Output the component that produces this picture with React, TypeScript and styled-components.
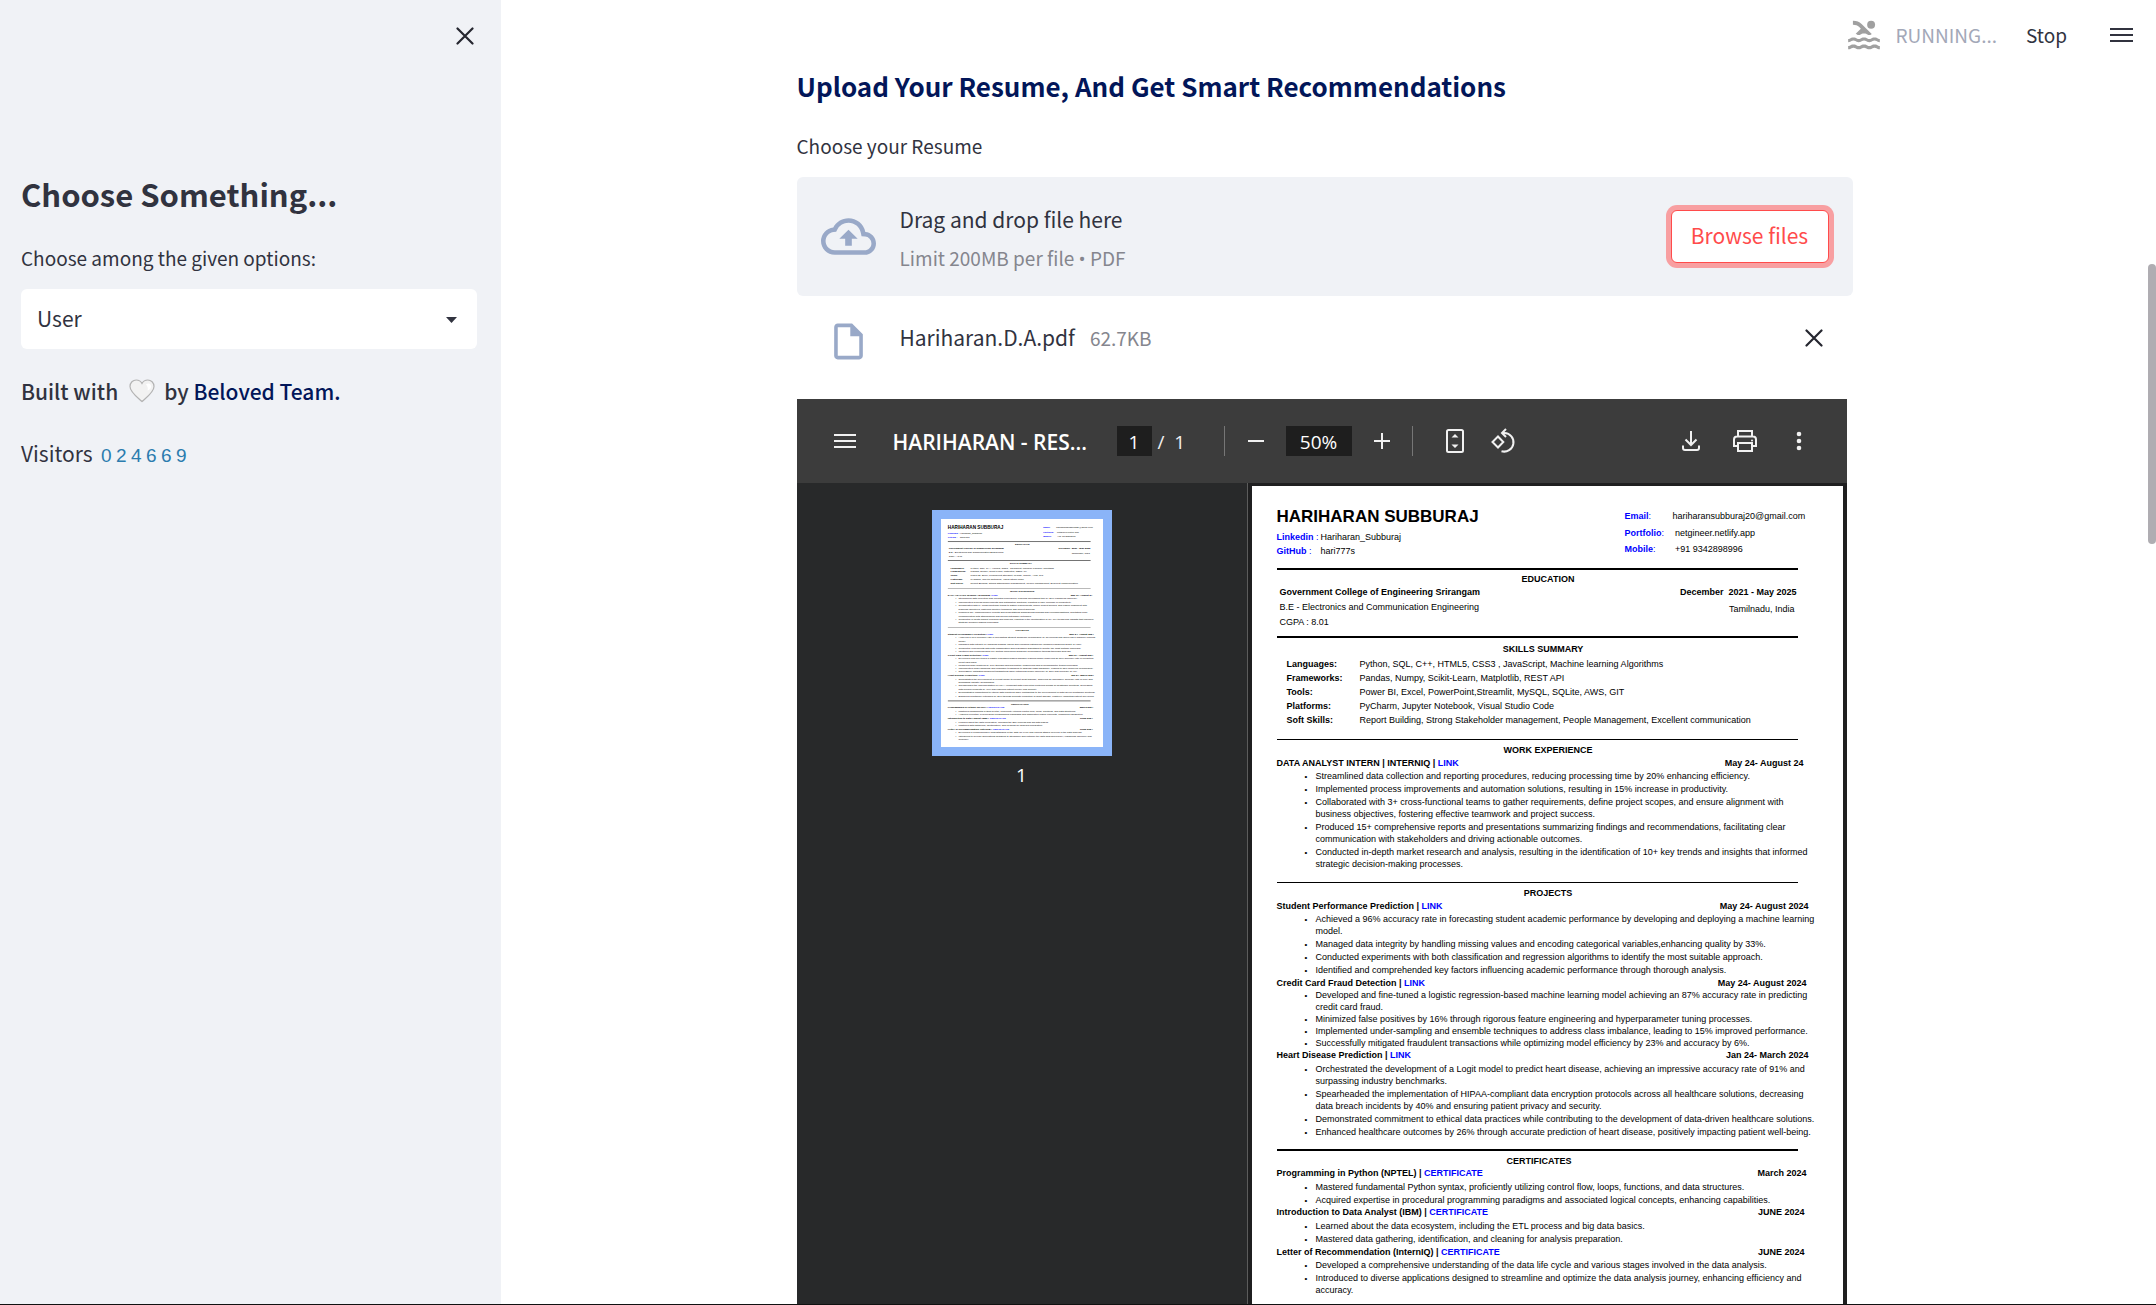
import React from "react";
import styled, { createGlobalStyle } from "styled-components";
import { MdPool } from "react-icons/md";

const ui = `"Noto Sans CJK SC", "Noto Sans", sans-serif`;
const viewerFont = `"Open Sans", "Noto Sans", sans-serif`;
const docFont = `"Liberation Sans", Arial, sans-serif`;

const Global = createGlobalStyle`
  *, *::before, *::after { box-sizing: border-box; }
  body { margin: 0; background: #fff; color: #31333f; font-family: ${ui}; }
  h1, h2, h3, h4, p, ul, dl, dd { margin: 0; padding: 0; }
  button { border: 0; padding: 0; background: none; color: inherit; font: inherit; cursor: pointer; }
  a { text-decoration: none; }
`;

/* ---------- application shell ---------- */

const Shell = styled.div`
  display: flex;
  height: 100vh;
  overflow: hidden;
  border-bottom: 1px solid #111;
`;

const Sidebar = styled.aside`
  flex: 0 0 501px;
  padding: 21px 24px 0 21px;
  background: #f0f2f6;
`;

const SidebarTop = styled.div`
  display: flex;
  justify-content: flex-end;
  height: 153px;
  margin-right: -3px;
  align-items: flex-start;
`;

const IconButton = styled.button`
  display: grid;
  place-items: center;
  width: 30px;
  height: 30px;
`;

const SidebarTitle = styled.h2`
  margin-bottom: 30px;
  font-size: 31px;
  line-height: 40px;
  font-weight: 600;
`;

const FieldLabel = styled.label`
  display: block;
  margin-bottom: 17px;
  font-size: 19px;
  line-height: 28px;
`;

const SelectBox = styled.div`
  position: relative;
  svg {
    position: absolute;
    right: 20px;
    top: 28px;
    pointer-events: none;
  }
`;

const Select = styled.select`
  appearance: none;
  width: 100%;
  height: 60px;
  padding: 0 16px 2px;
  border: 0;
  border-radius: 6px;
  background: #fff;
  color: inherit;
  font: 400 21px ${ui};
`;

const Credit = styled.p`
  display: flex;
  align-items: center;
  margin-top: 26px;
  font-size: 21px;
  line-height: 32px;
  font-weight: 500;
  white-space: pre;
  svg { margin: 0 9px 0 11px; }
`;

const CreditLink = styled.a`
  color: #021659;
`;

const Visitors = styled.p`
  display: flex;
  margin-top: 30px;
  font-size: 21px;
  line-height: 32px;
`;

const Counter = styled.span`
  display: grid;
  grid-auto-flow: column;
  grid-auto-columns: 15px;
  margin-left: 6px;
  text-align: center;
  color: #2b7cae;
  font-family: "Liberation Sans", Arial, sans-serif;
  font-size: 19px;
  line-height: 38px;
`;

const Main = styled.main`
  flex: 1;
  min-width: 0;
  display: flex;
  flex-direction: column;
`;

const TopBar = styled.header`
  display: flex;
  justify-content: flex-end;
  align-items: center;
  height: 68px;
  padding: 2px 12px 0 0;
  font-size: 19px;
  line-height: 28px;
`;

const Running = styled.span`
  margin: 0 29px 0 13px;
  color: #a3a8b8;
`;

const MenuButton = styled(IconButton)`
  margin-left: 39px;
`;

const Column = styled.div`
  flex: 1;
  min-height: 0;
  display: flex;
  flex-direction: column;
  width: calc(100% - 64px);
  max-width: 1056px;
  margin: 0 auto;
`;

const PageTitle = styled.h1`
  margin-bottom: 28px;
  color: #021659;
  font-size: 26px;
  line-height: 36px;
  font-weight: 600;
`;

const DropZone = styled.section`
  display: flex;
  align-items: center;
  height: 119px;
  padding: 0 24px;
  border-radius: 6px;
  background: #f0f2f6;
`;

const DropText = styled.div`
  flex: 1;
  display: grid;
  gap: 9px;
  padding-top: 3px;
  margin-left: 24px;
`;

const Line = styled.span`
  font-size: 21px;
  line-height: 32px;
`;

const Hint = styled.span`
  color: #85868e;
  font-size: 19px;
  line-height: 28px;
`;

const Dot = styled.span`
  font-family: "Open Sans", sans-serif;
`;

const Browse = styled.button`
  width: 158px;
  height: 53px;
  margin-bottom: 1px;
  padding-bottom: 2px;
  border: 1px solid #ff4b4b;
  border-radius: 6px;
  background: #fff;
  box-shadow: 0 0 0 5px rgba(255, 75, 75, 0.5);
  color: #ff4b4b;
  font-size: 21px;
  line-height: 32px;
`;

const FileRow = styled.div`
  display: flex;
  align-items: flex-start;
  height: 103px;
  padding: 24px 24px 0 30px;
  ${Line} { margin: 1px 0 0 30px; }
  ${Hint} { flex: 1; margin: 4px 0 0 15px; }
  ${IconButton} { margin-top: 3px; }
`;

const Rail = styled.div`
  flex: 0 0 8px;
  padding-top: 264px;
`;

const Thumb = styled.div`
  height: 280px;
  border-radius: 4px;
  background: #afadb2;
`;

/* ---------- PDF viewer ---------- */

const Viewer = styled.section`
  flex: 1;
  min-height: 0;
  display: flex;
  flex-direction: column;
  margin-right: 6px;
  overflow: hidden;
  background: #28292a;
  color: #fff;
  font-family: ${viewerFont};
`;

const Toolbar = styled.div`
  flex: 0 0 84px;
  display: flex;
  align-items: center;
  padding: 0 33px;
  background: #3c3c3c;
  color: #f1f1f1;
  font-size: 19px;
  line-height: 30px;
`;

const DocName = styled.span`
  width: 200px;
  margin: 0 24px 0 33px;
  padding-top: 2px;
  color: #fff;
  font-size: 21px;
  font-weight: 600;
  white-space: nowrap;
`;

const ToolInput = styled.input<{ $width: number }>`
  width: ${(p) => p.$width}px;
  height: 30px;
  padding: 2px 0 0;
  border: 0;
  background: #1e1e1e;
  color: #fff;
  text-align: center;
  font: 400 19px ${viewerFont};
`;

const PageCount = styled.span`
  width: 72px;
  padding: 2px 0 0 6px;
  white-space: pre;
`;

const Divider = styled.span<{ $after?: number }>`
  width: 1px;
  height: 30px;
  margin-right: ${(p) => p.$after ?? 0}px;
  background: #767676;
`;

const ToolGroup = styled.div<{ $gap: number; $end?: boolean }>`
  display: flex;
  align-items: center;
  gap: ${(p) => p.$gap}px;
  margin-left: ${(p) => (p.$end ? "auto" : "0")};
`;

const Panes = styled.div`
  flex: 1;
  min-height: 0;
  display: flex;
`;

const ThumbPane = styled.div`
  flex: 1;
  display: flex;
  flex-direction: column;
  align-items: center;
  padding-top: 27px;
  border-right: 1px solid #5c5c5c;
  font-size: 19px;
  line-height: 38px;
`;

const ThumbFrame = styled.div`
  width: 180px;
  height: 246px;
  border: 9px solid #8ab4f8;
  background: #fff;
  overflow: hidden;
`;

const Miniature = styled.div`
  width: 591px;
  transform: scale(0.274);
  transform-origin: 0 0;
`;

const PagePane = styled.div`
  flex: 0 0 599px;
  padding: 3px 4px 0 4px;
  background: #1f1f20;
  overflow: hidden;
`;

/* ---------- résumé document ---------- */

const Sheet = styled.article`
  height: 832px;
  padding: 21px 34px 0 25px;
  background: #fff;
  color: #000;
  font-family: ${docFont};
  font-size: 9px;
  line-height: 12px;
  white-space: nowrap;
`;

const SheetHead = styled.div`
  display: flex;
  justify-content: space-between;
`;

const Name = styled.h2`
  margin-bottom: 3px;
  font-size: 17px;
  line-height: 20px;
  font-weight: 700;
`;

const Pairs = styled.dl<{ $label: number; $line: number; $blue?: boolean }>`
  display: grid;
  grid-template-columns: ${(p) => p.$label}px 1fr;
  line-height: ${(p) => p.$line}px;
  dt { color: ${(p) => (p.$blue ? "#00f" : "#000")}; }
`;

const Contact = styled(Pairs)`
  width: 184px;
  padding-top: 1px;
`;

const Skills = styled(Pairs)`
  margin: 2px 0 0 10px;
`;

const Rule = styled.hr<{ $before: number; $thick?: boolean }>`
  height: ${(p) => (p.$thick ? 2 : 1)}px;
  margin: ${(p) => p.$before}px 11px 0 0;
  border: 0;
  background: #000;
`;

const Section = styled.h3<{ $side?: "left" | "right"; $before?: number }>`
  margin: ${(p) => p.$before ?? 4}px 0 0;
  padding: ${(p) => (p.$side === "right" ? "0 0 0 11px" : p.$side === "left" ? "0 7px 0 0" : "0 0 0 1px")};
  font-size: 9px;
  font-weight: 700;
  text-align: center;
`;

const School = styled.div`
  display: flex;
  justify-content: space-between;
  padding: 0 12px 0 3px;
  line-height: 15px;
`;

const SchoolSide = styled.div`
  text-align: right;
  p { padding: 2px 2px 0 0; }
`;

const Entry = styled.h4<{ $inset: number; $before?: number }>`
  display: flex;
  justify-content: space-between;
  margin-top: ${(p) => p.$before ?? 0}px;
  padding-right: ${(p) => p.$inset}px;
  font-size: 9px;
  font-weight: 700;
  a { color: #00f; }
`;

const Bullets = styled.ul<{ $gap: number; $before: number }>`
  display: grid;
  gap: ${(p) => p.$gap}px;
  margin: ${(p) => p.$before}px 0 0 28px;
  list-style: none;
`;

const Bullet = styled.li`
  display: grid;
  grid-template-columns: 11px 1fr;
  &::before { content: "•"; height: 12px; font-size: 8px; line-height: 14px; }
`;

const TextLine = styled.span`
  grid-column: 2;
`;

type Job = { title: string; link: string; date: string; inset: number; gap: number; lead: number; before: number; items: string[][] };

const work: Job[] = [
  {
    title: "DATA ANALYST INTERN | INTERNIQ | ", link: "LINK", date: "May 24- August 24", inset: 5, gap: 1, lead: 1, before: 1,
    items: [
      ["Streamlined data collection and reporting procedures, reducing processing time by 20% enhancing efficiency."],
      ["Implemented process improvements and automation solutions, resulting in 15% increase in productivity."],
      ["Collaborated with 3+ cross-functional teams to gather requirements, define project scopes, and ensure alignment with", "business objectives, fostering effective teamwork and project success."],
      ["Produced 15+ comprehensive reports and presentations summarizing findings and recommendations, facilitating clear", "communication with stakeholders and driving actionable outcomes."],
      ["Conducted in-depth market research and analysis, resulting in the identification of 10+ key trends and insights that informed", "strategic decision-making processes."],
    ],
  },
];

const projects: Job[] = [
  {
    title: "Student Performance Prediction | ", link: "LINK", date: "May 24- August 2024", inset: 0, gap: 1, lead: 1, before: 1,
    items: [
      ["Achieved a 96% accuracy rate in forecasting student academic performance by developing and deploying a machine learning", "model."],
      ["Managed data integrity by handling missing values and encoding categorical variables,enhancing quality by 33%."],
      ["Conducted experiments with both classification and regression algorithms to identify the most suitable approach."],
      ["Identified and comprehended key factors influencing academic performance through thorough analysis."],
    ],
  },
  {
    title: "Credit Card Fraud Detection | ", link: "LINK", date: "May 24- August 2024", inset: 2, gap: 0, lead: 0, before: 1,
    items: [
      ["Developed and fine-tuned a logistic regression-based machine learning model achieving an 87% accuracy rate in predicting", "credit card fraud."],
      ["Minimized false positives by 16% through rigorous feature engineering and hyperparameter tuning processes."],
      ["Implemented under-sampling and ensemble techniques to address class imbalance, leading to 15% improved performance."],
      ["Successfully mitigated fraudulent transactions while optimizing model efficiency by 23% and accuracy by 6%."],
    ],
  },
  {
    title: "Heart Disease Prediction | ", link: "LINK", date: "Jan 24- March 2024", inset: 0, gap: 1, lead: 2, before: 0,
    items: [
      ["Orchestrated the development of a Logit model to predict heart disease, achieving an impressive accuracy rate of 91% and", "surpassing industry benchmarks."],
      ["Spearheaded the implementation of HIPAA-compliant data encryption protocols across all healthcare solutions, decreasing", "data breach incidents by 40% and ensuring patient privacy and security."],
      ["Demonstrated commitment to ethical data practices while contributing to the development of data-driven healthcare solutions."],
      ["Enhanced healthcare outcomes by 26% through accurate prediction of heart disease, positively impacting patient well-being."],
    ],
  },
];

const certificates: Job[] = [
  {
    title: "Programming in Python (NPTEL) | ", link: "CERTIFICATE", date: "March 2024", inset: 2, gap: 1, lead: 2, before: 0,
    items: [
      ["Mastered fundamental Python syntax, proficiently utilizing control flow, loops, functions, and data structures."],
      ["Acquired expertise in procedural programming paradigms and associated logical concepts, enhancing capabilities."],
    ],
  },
  {
    title: "Introduction to Data Analyst (IBM) | ", link: "CERTIFICATE", date: "JUNE 2024", inset: 4, gap: 1, lead: 2, before: 0,
    items: [
      ["Learned about the data ecosystem, including the ETL process and big data basics."],
      ["Mastered data gathering, identification, and cleaning for analysis preparation."],
    ],
  },
  {
    title: "Letter of Recommendation (InternIQ) | ", link: "CERTIFICATE", date: "JUNE 2024", inset: 4, gap: 1, lead: 1, before: 1,
    items: [
      ["Developed a comprehensive understanding of the data life cycle and various stages involved in the data analysis."],
      ["Introduced to diverse applications designed to streamline and optimize the data analysis journey, enhancing efficiency and", "accuracy."],
    ],
  },
];

const Jobs = ({ list }: { list: Job[] }) => (
  <>
    {list.map((job) => (
      <React.Fragment key={job.title}>
        <Entry $inset={job.inset} $before={job.before}>
          <span>{job.title}<a href="#">{job.link}</a></span>
          <span>{job.date}</span>
        </Entry>
        <Bullets $gap={job.gap} $before={job.lead}>
          {job.items.map((lines) => (
            <Bullet key={lines[0]}>
              {lines.map((line) => <TextLine key={line}>{line}</TextLine>)}
            </Bullet>
          ))}
        </Bullets>
      </React.Fragment>
    ))}
  </>
);

const Resume = () => (
  <Sheet>
    <SheetHead>
      <div>
        <Name>HARIHARAN SUBBURAJ</Name>
        <Pairs $label={44} $line={14} $blue>
          <dt><b>Linkedin</b> :</dt><dd>Hariharan_Subburaj</dd>
          <dt><b>GitHub</b> :</dt><dd>hari777s</dd>
        </Pairs>
      </div>
      <Contact $label={48} $line={16} $blue>
        <dt><b>Email</b>:</dt><dd>hariharansubburaj20@gmail.com</dd>
        <dt><b>Portfolio</b>:</dt><dd>&nbsp;netgineer.netlify.app</dd>
        <dt><b>Mobile</b>:</dt><dd>&nbsp;+91 9342898996</dd>
      </Contact>
    </SheetHead>
    <Rule $before={10} $thick />
    <Section $side="right" $before={3}>EDUCATION</Section>
    <School>
      <div>
        <b>Government College of Engineering Srirangam</b>
        <p>B.E - Electronics and Communication Engineering</p>
        <p>CGPA : 8.01</p>
      </div>
      <SchoolSide>
        <b>December&nbsp; 2021 - May 2025</b>
        <p>Tamilnadu, India</p>
      </SchoolSide>
    </School>
    <Rule $before={6} $thick />
    <Section $before={5}>SKILLS SUMMARY</Section>
    <Skills $label={73} $line={14}>
      <dt><b>Languages:</b></dt><dd>Python, SQL, C++, HTML5, CSS3 , JavaScript, Machine learning Algorithms</dd>
      <dt><b>Frameworks:</b></dt><dd>Pandas, Numpy, Scikit-Learn, Matplotlib, REST API</dd>
      <dt><b>Tools:</b></dt><dd>Power BI, Excel, PowerPoint,Streamlit, MySQL, SQLite, AWS, GIT</dd>
      <dt><b>Platforms:</b></dt><dd>PyCharm, Jupyter Notebook, Visual Studio Code</dd>
      <dt><b>Soft Skills:</b></dt><dd>Report Building, Strong Stakeholder management, People Management, Excellent communication</dd>
    </Skills>
    <Rule $before={12} />
    <Section $side="right">WORK EXPERIENCE</Section>
    <Jobs list={work} />
    <Rule $before={12} />
    <Section $side="right">PROJECTS</Section>
    <Jobs list={projects} />
    <Rule $before={11} $thick />
    <Section $side="left">CERTIFICATES</Section>
    <Jobs list={certificates} />
  </Sheet>
);

/* ---------- icons ---------- */

const Cross = () => (
  <svg width="18" height="18" viewBox="0 0 18 18" fill="none" stroke="#262730" strokeWidth="2.2" strokeLinecap="round" aria-hidden>
    <path d="M1.5 1.5l15 15M16.5 1.5l-15 15" />
  </svg>
);

const Bars = ({ width, height, weight }: { width: number; height: number; weight: number }) => (
  <svg width={width} height={height} fill="currentColor" aria-hidden>
    <rect width={width} height={weight} />
    <rect y={(height - weight) / 2} width={width} height={weight} />
    <rect y={height - weight} width={width} height={weight} />
  </svg>
);

const Cloud = () => (
  <svg width="55" height="55" viewBox="0 0 24 24" fill="#99a9c8" aria-hidden>
    <path d="M19.35 10.04A7.49 7.49 0 0012 4C9.11 4 6.6 5.64 5.35 8.04A5.994 5.994 0 000 14c0 3.31 2.69 6 6 6h13c2.76 0 5-2.24 5-5 0-2.64-2.05-4.78-4.65-4.96zM19 18H6c-2.21 0-4-1.79-4-4 0-2.05 1.53-3.76 3.56-3.97l1.07-.11.5-.95A5.469 5.469 0 0112 6c2.62 0 4.88 1.86 5.39 4.43l.3 1.5 1.53.11A2.98 2.98 0 0122 15c0 1.65-1.35 3-3 3zM8 13h2.55v3h2.9v-3H16l-4-4z" />
  </svg>
);

const FileIcon = () => (
  <svg width="43" height="43" viewBox="0 0 24 24" fill="#99a9c8" aria-hidden>
    <path d="M14 2H6c-1.1 0-1.99.9-1.99 2L4 20c0 1.1.89 2 1.99 2H18c1.1 0 2-.9 2-2V8l-6-6zM6 20V4h7v5h5v11H6z" />
  </svg>
);

const Heart = () => (
  <svg width="26" height="24" viewBox="0 0 26 24" aria-hidden>
    <path d="M13 22.5C10 19.500 1 13.500 1 7.500C1 3.500 4 1 7.200 1C10 1 12 2.500 13 4.500C14 2.500 16 1 18.800 1C22 1 25 3.500 25 7.500C25 13.500 16 19.500 13 22.500Z" fill="#f2f2f2" stroke="#b3b3b3" strokeWidth="1.200" />
    <path d="M17 5.500c2-2 5-1 5 2c0 2-1.500 3.500-3.500 4c.8-2 .2-4-1.500-6z" fill="#fff" />
  </svg>
);

const FitPage = () => (
  <svg width="18" height="24" viewBox="0 0 18 24" fill="#f1f1f1" aria-hidden>
    <rect x="1" y="1" width="16" height="22" rx="1.500" fill="none" stroke="#f1f1f1" strokeWidth="2" />
    <path d="M5.500 8.500L9 5l3.500 3.500zM5.500 15.500L9 19l3.500-3.500z" />
  </svg>
);

const Rotate = () => (
  <svg width="26" height="26" viewBox="0 0 26 26" fill="none" stroke="#f1f1f1" strokeWidth="2" aria-hidden>
    <path d="M8 8.500l5.300 5.500L8 19.500 2.500 14z" />
    <path d="M11.500 23.200a9.300 9.300 0 1 0 3-18.200h-2.500" />
    <path d="M16 1l-4 4 4 4" />
  </svg>
);

const Download = () => (
  <svg width="18" height="20" viewBox="0 0 18 20" fill="none" stroke="#f1f1f1" strokeWidth="2" aria-hidden>
    <path d="M9 0v13.500M3.500 8.500L9 14l5.500-5.500M1 14.500V17q0 2 2 2h12q2 0 2-2v-2.500" />
  </svg>
);

const Print = () => (
  <svg width="24" height="22" viewBox="0 0 24 22" fill="none" stroke="#f1f1f1" strokeWidth="2" aria-hidden>
    <path d="M5 6.500V1h14v5.500M5 16H1V9.500q0-3 3-3h16q3 0 3 3V16h-4M5 13h14v8H5z" />
    <circle cx="19" cy="10.500" r="1" fill="#f1f1f1" stroke="none" />
  </svg>
);

const More = () => (
  <svg width="6" height="20" viewBox="0 0 6 20" fill="#f1f1f1" aria-hidden>
    <circle cx="3" cy="3" r="2.300" /><circle cx="3" cy="10" r="2.300" /><circle cx="3" cy="17" r="2.300" />
  </svg>
);

const Step = ({ plus }: { plus?: boolean }) => (
  <svg width="16" height="16" viewBox="0 0 16 16" stroke="#f1f1f1" strokeWidth="2" aria-hidden>
    <path d={plus ? "M0 8h16M8 0v16" : "M0 8h16"} />
  </svg>
);

/* ---------- page ---------- */

export default function App() {
  return (
    <Shell>
      <Global />
      <Sidebar>
        <SidebarTop>
          <IconButton aria-label="Close sidebar"><Cross /></IconButton>
        </SidebarTop>
        <SidebarTitle>Choose Something...</SidebarTitle>
        <FieldLabel htmlFor="role">Choose among the given options:</FieldLabel>
        <SelectBox>
          <Select id="role" defaultValue="User">
            <option>User</option>
          </Select>
          <svg width="11" height="6" viewBox="0 0 11 6" fill="#31333f" aria-hidden><path d="M0 0h11L5.500 6z" /></svg>
        </SelectBox>
        <Credit>Built with<Heart />by <CreditLink href="#">Beloved Team.</CreditLink></Credit>
        <Visitors>
          Visitors
          <Counter>{"024669".split("").map((digit, i) => <span key={i}>{digit}</span>)}</Counter>
        </Visitors>
      </Sidebar>

      <Main>
        <TopBar>
          <MdPool size={38} color="#a0a0a0" aria-hidden />
          <Running>RUNNING...</Running>
          <button>Stop</button>
          <MenuButton aria-label="Menu"><Bars width={23} height={14} weight={2} /></MenuButton>
        </TopBar>
        <Column>
          <PageTitle>Upload Your Resume, And Get Smart Recommendations</PageTitle>
          <FieldLabel as="p">Choose your Resume</FieldLabel>
          <DropZone>
            <Cloud />
            <DropText>
              <Line>Drag and drop file here</Line>
              <Hint>Limit 200MB per file <Dot>•</Dot> PDF</Hint>
            </DropText>
            <Browse>Browse files</Browse>
          </DropZone>
          <FileRow>
            <FileIcon />
            <Line>Hariharan.D.A.pdf</Line>
            <Hint>62.7KB</Hint>
            <IconButton aria-label="Remove file"><Cross /></IconButton>
          </FileRow>
          <Viewer>
            <Toolbar>
              <IconButton aria-label="Toggle thumbnails"><Bars width={22} height={14} weight={2} /></IconButton>
              <DocName>HARIHARAN - RES...</DocName>
              <ToolInput $width={35} defaultValue="1" aria-label="Page" />
              <PageCount>/  1</PageCount>
              <Divider $after={16} />
              <ToolGroup $gap={15}>
                <IconButton aria-label="Zoom out"><Step /></IconButton>
                <ToolInput $width={66} defaultValue="50%" aria-label="Zoom level" />
                <IconButton aria-label="Zoom in"><Step plus /></IconButton>
                <Divider $after={27} />
              </ToolGroup>
              <ToolGroup $gap={18}>
                <IconButton aria-label="Fit to page"><FitPage /></IconButton>
                <IconButton aria-label="Rotate"><Rotate /></IconButton>
              </ToolGroup>
              <ToolGroup $gap={24} $end>
                <IconButton aria-label="Download"><Download /></IconButton>
                <IconButton aria-label="Print"><Print /></IconButton>
                <IconButton aria-label="More actions"><More /></IconButton>
              </ToolGroup>
            </Toolbar>
            <Panes>
              <ThumbPane>
                <ThumbFrame aria-hidden>
                  <Miniature><Resume /></Miniature>
                </ThumbFrame>
                1
              </ThumbPane>
              <PagePane><Resume /></PagePane>
            </Panes>
          </Viewer>
        </Column>
      </Main>
      <Rail><Thumb /></Rail>
    </Shell>
  );
}
